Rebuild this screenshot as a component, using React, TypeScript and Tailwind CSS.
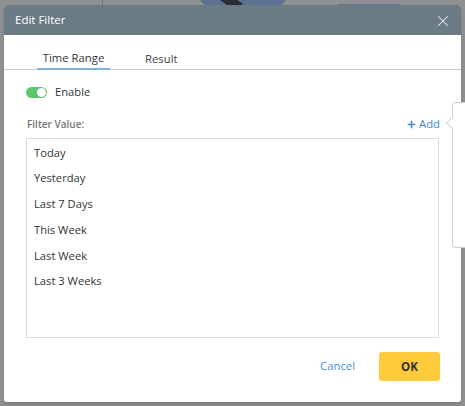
import { X, Plus } from 'lucide-react';

const VALUES = ['Today', 'Yesterday', 'Last 7 Days', 'This Week', 'Last Week', 'Last 3 Weeks'];

export default function App() {
  return (
    <div
      className="relative w-[465px] h-[406px] overflow-hidden bg-[#8e9092]"
      style={{ fontFamily: '"Open Sans", "Noto Sans", sans-serif' }}
    >
      {/* backdrop shapes behind the overlay */}
      <div className="absolute left-[195px] top-[-40px] w-[96px] h-[50px] rounded-full bg-[#5c7193]" />
      <div className="absolute left-[218px] top-[-4px] w-[24px] h-[10px] rotate-[35deg] bg-[#2a2d33]" />
      <div className="absolute left-[338px] top-[4px] w-[62px] h-[2px] bg-[#5f7697]" />
      <div className="absolute left-[102px] top-0 w-px h-[5px] bg-[#5f7697]" />

      {/* dialog */}
      <div className="absolute left-[4px] top-[5px] w-[457px] h-[397px] bg-white rounded-[3px] overflow-hidden flex flex-col shadow-md">
        <div className="h-[30px] bg-[#6b7b85] flex items-center justify-between pl-[11px] pr-[10px] shrink-0">
          <span className="text-white text-[11.5px]">Edit Filter</span>
          <X size={18} strokeWidth={1.4} className="text-[#e6eaed] translate-x-[1px] translate-y-[1px]" />
        </div>

        <div className="h-[35px] border-b border-[#c9c9c9] flex items-end pl-[33px] shrink-0">
          <div className="w-[73px] h-full flex items-end justify-center pb-[1px] border-b-2 border-[#7fb0da] -mb-px">
            <span className="text-[11.3px] text-[#333]">Time Range</span>
          </div>
          <div className="ml-[35px] h-full flex items-end pb-[1px]">
            <span className="text-[11.3px] text-[#444]">Result</span>
          </div>
        </div>

        <div className="flex-1 flex flex-col px-[22px]">
          <div className="flex items-center mt-[16px] h-[12px]">
            <div className="relative w-[21px] h-[11px] rounded-full bg-[#5cc76b]">
              <div className="absolute right-[1px] top-[1px] w-[9px] h-[9px] rounded-full bg-white" />
            </div>
            <span className="ml-[8px] text-[11.2px] text-[#333]">Enable</span>
          </div>

          <div className="flex items-center justify-between mt-[19px] h-[14px]">
            <span className="text-[10px] font-semibold text-[#767676] ml-px">Filter Value:</span>
            <span className="flex items-center text-[11.3px] text-[#3a8ad6] mr-[-1px]">
              <Plus size={11} strokeWidth={3.2} className="mr-[2px]" />
              Add
            </span>
          </div>

          <div className="mt-[7px] h-[200px] border border-[#dcdcdc] pt-[1px] pl-[7px]">
            {VALUES.map(v => (
              <div key={v} className="h-[25.8px] flex items-center text-[11.2px] text-[#333]">
                {v}
              </div>
            ))}
          </div>

          <div className="mt-[14px] flex items-center justify-end mr-[-1px]">
            <span className="text-[11.3px] text-[#4a90d9] mr-[24px]">Cancel</span>
            <div className="w-[61px] h-[29px] rounded-[3px] bg-[#ffcb3d] flex items-center justify-center text-[11.5px] font-bold text-[#333]">
              OK
            </div>
          </div>
        </div>
      </div>

      {/* popover peeking in from the right */}
      <div className="absolute left-[452px] top-[102px] w-[30px] h-[146px] bg-white border border-[#cfcfcf] rounded-[3px]" />
      <div className="absolute left-[448px] top-[119px] w-[8px] h-[8px] bg-white border-l border-b border-[#cfcfcf] rotate-45" />
    </div>
  );
}
